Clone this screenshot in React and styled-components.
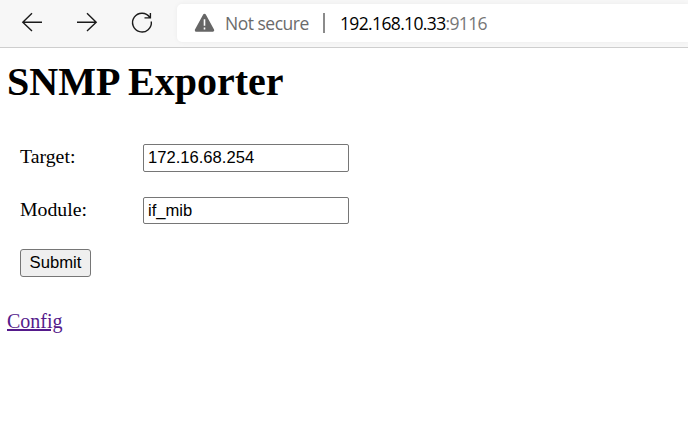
import React from 'react';
import styled, { createGlobalStyle } from 'styled-components';

const GlobalStyle = createGlobalStyle`
  * { box-sizing: border-box; }
  body { margin: 0; background: #fff; overflow: hidden; }
`;

const Toolbar = styled.header`
  display: flex;
  height: 48px;
  padding: 4px 0 5px 20px;
  background: #f7f7f7;
  border-bottom: 1px solid #cecece;
`;

const NavButtons = styled.nav`
  display: flex;
  gap: 31px;
  width: 157px;
  padding-top: 6px;
`;

const NavButton = styled.button`
  width: 24px;
  height: 24px;
  padding: 0;
  border: 0;
  background: none;
  svg { display: block; }
`;

const AddressBar = styled.div`
  flex: 1;
  display: flex;
  align-items: center;
  height: 38px;
  padding-left: 17px;
  background: #fff;
  border-radius: 5px 0 0 5px;
  box-shadow: 0 0 5px rgba(0, 0, 0, 0.05);
  font: 17.5px/24px "Open Sans", "Noto Sans", sans-serif;
  white-space: nowrap;
`;

const WarningIcon = styled.svg`
  flex: none;
  margin-top: -1px;
`;

const Security = styled.span`
  width: 98px;
  margin: -1px 0 0 9px;
  color: #6b6b6b;
  letter-spacing: -0.5px;
`;

const Divider = styled.span`
  width: 2px;
  height: 20px;
  margin-right: 15px;
  background: #8b8b8b;
`;

const Url = styled.span`
  margin-top: -1px;
  color: #000;
  letter-spacing: -0.64px;
`;

const Port = styled.span`
  color: #767676;
`;

const Page = styled.main`
  padding: 11px 7px 0;
  font: 20px/23px "Liberation Serif", "Times New Roman", serif;
  color: #000;
`;

const Title = styled.h1`
  margin: 0;
  font-size: 40px;
  line-height: 46px;
`;

const Form = styled.form`
  display: flex;
  flex-direction: column;
  align-items: flex-start;
  gap: 25px;
  padding: 39px 13px 0;
`;

const Field = styled.div`
  display: flex;
  align-items: center;
`;

const Label = styled.label`
  width: 123px;
  padding-bottom: 3px;
  font-size: 19.8px;
`;

const TextInput = styled.input`
  width: 206px;
  height: ${(p) => p.$height}px;
  margin: 0;
  padding: 0 4px;
  border: 1px solid #767676;
  border-radius: 2px;
  background: #fff;
  color: #000;
  font: 16.6px "Liberation Sans", Arial, sans-serif;
  outline: 0;
`;

const Submit = styled.button`
  width: 71px;
  height: 28px;
  padding: 0;
  border: 1px solid #767676;
  border-radius: 3px;
  background: #efefef;
  color: #000;
  font: 16.67px "Liberation Sans", Arial, sans-serif;
`;

const ConfigLink = styled.a`
  display: inline-block;
  margin-top: 33px;
  color: #551a8b;
  text-decoration: underline;
`;

const Icon = ({ children }) => (
  <svg width="24" height="24" viewBox="0 0 24 24" fill="none" stroke="#1b1b1b" strokeWidth="1.4">
    {children}
  </svg>
);

export default function App() {
  return (
    <>
      <GlobalStyle />
      <Toolbar>
        <NavButtons>
          <NavButton type="button" aria-label="Back">
            <Icon><path d="M22 12.2H2.8M12 3.3L2.8 12.2L12 21" /></Icon>
          </NavButton>
          <NavButton type="button" aria-label="Forward">
            <Icon><path d="M2 12.2H21.2M12 3.3L21.2 12.2L12 21" /></Icon>
          </NavButton>
          <NavButton type="button" aria-label="Refresh">
            <Icon><path d="M21.3 11.5A9.4 9.4 0 1 1 19.8 7.4M20.4 3V7.9H14.5" /></Icon>
          </NavButton>
        </NavButtons>
        <AddressBar>
          <WarningIcon width="22" height="20" viewBox="0 0 22 20">
            <path d="M10.5 2.2L18.7 17.2H2.3Z" fill="#666" stroke="#666" strokeWidth="3" strokeLinejoin="round" />
            <path d="M10.5 6.2V12.7M10.5 14.5V16.5" stroke="#fff" strokeWidth="1.6" />
          </WarningIcon>
          <Security>Not secure</Security>
          <Divider />
          <Url>192.168.10.33<Port>:9116</Port></Url>
        </AddressBar>
      </Toolbar>
      <Page>
        <Title>SNMP Exporter</Title>
        <Form onSubmit={(e) => e.preventDefault()}>
          <Field>
            <Label htmlFor="target">Target:</Label>
            <TextInput id="target" $height={28} defaultValue="172.16.68.254" />
          </Field>
          <Field>
            <Label htmlFor="module">Module:</Label>
            <TextInput id="module" $height={27} defaultValue="if_mib" />
          </Field>
          <Submit>Submit</Submit>
        </Form>
        <ConfigLink href="#config">Config</ConfigLink>
      </Page>
    </>
  );
}
